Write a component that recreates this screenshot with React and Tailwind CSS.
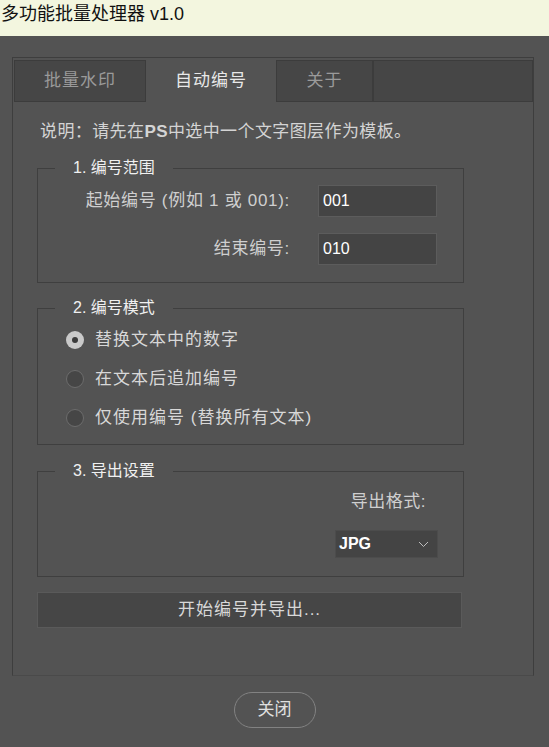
import React, { useState } from "react";

const TABS = [
  { id: "watermark", label: "批量水印", width: "w-[132px]" },
  { id: "number", label: "自动编号", width: "w-[130px]" },
  { id: "about", label: "关于", width: "w-[97px]" },
];

const MODES = ["替换文本中的数字", "在文本后追加编号", "仅使用编号 (替换所有文本)"];

const FONT = { fontFamily: '"Liberation Sans", "Noto Sans CJK SC", sans-serif' };

function Legend({ children }) {
  return (
    <legend className="ml-[17px] px-[18px] text-[16px] leading-[24px] text-[#f0f0f0]">
      {children}
    </legend>
  );
}

function Radio({ checked, label, onClick }) {
  return (
    <div className="flex h-[39px] items-center cursor-default" onClick={onClick}>
      {checked ? (
        <span className="ml-[28px] flex h-[18px] w-[18px] items-center justify-center rounded-full bg-[#c9c9c9]">
          <span className="h-[6px] w-[6px] rounded-full bg-[#3a3a3a]" />
        </span>
      ) : (
        <span className="ml-[28px] h-[18px] w-[18px] rounded-full border border-[#6c6c6c] bg-[#464646]" />
      )}
      <span className="ml-[11px] text-[17px] tracking-[1px] text-[#d8d8d8]">{label}</span>
    </div>
  );
}

export default function App() {
  const [tab, setTab] = useState("number");
  const [mode, setMode] = useState(0);
  const [start, setStart] = useState("001");
  const [end, setEnd] = useState("010");

  return (
    <div className="min-h-[747px] w-[549px] bg-[#535353]" style={FONT}>
      {/* title bar */}
      <div className="h-[36px] bg-[#f3f6df] pl-[1px] text-[18px] leading-[28px] text-[#111111]">
        多功能批量处理器 v1.0
      </div>

      {/* tab panel */}
      <div className="ml-[12px] mt-[21px] w-[522px] border border-[#3e3e3e] border-b-[#4a4a4a] pb-[47px]">
        <div className="flex h-[42px] mt-[2px] pl-[1px]">
          {TABS.map(t =>
            t.id === tab ? (
              <div
                key={t.id}
                className={`${t.width} flex items-center justify-center text-[17px] tracking-[1px] text-[#e8e8e8]`}
              >
                {t.label}
              </div>
            ) : (
              <div
                key={t.id}
                onClick={() => setTab(t.id)}
                className={`${t.width} flex items-center justify-center border border-[#3c3c3c] bg-[#464646] text-[17px] tracking-[1px] text-[#9a9a9a]`}
              >
                {t.label}
              </div>
            )
          )}
          <div className="flex-1 border border-[#3c3c3c] bg-[#464646]" />
        </div>

        <div className="mt-[18px] pl-[27px] text-[17px] leading-[24px] tracking-[0.4px] text-[#d4d4d4]">
          说明：请先在<b className="font-bold">PS</b>中选中一个文字图层作为模板。
        </div>

        {/* 1. range */}
        <fieldset className="ml-[24px] mt-[12px] w-[427px] border border-[#3f3f3f] pb-[17px] pt-[5px]">
          <Legend>1. 编号范围</Legend>
          <div className="flex items-center">
            <label className="w-[252px] text-right text-[17px] tracking-[0.7px] text-[#cfcfcf]">
              起始编号 (例如 1 或 001):
            </label>
            <input
              className="ml-[28px] h-[32px] w-[119px] border border-[#5c5c5c] bg-[#444444] px-[4px] text-[16px] text-white outline-none"
              value={start}
              onChange={e => setStart(e.target.value)}
            />
          </div>
          <div className="mt-[16px] flex items-center">
            <label className="w-[252px] text-right text-[17px] tracking-[0.7px] text-[#cfcfcf]">
              结束编号:
            </label>
            <input
              className="ml-[28px] h-[32px] w-[119px] border border-[#5c5c5c] bg-[#444444] px-[4px] text-[16px] text-white outline-none"
              value={end}
              onChange={e => setEnd(e.target.value)}
            />
          </div>
        </fieldset>

        {/* 2. mode */}
        <fieldset className="ml-[24px] mt-[13px] w-[427px] border border-[#3f3f3f] pb-[7px]">
          <Legend>2. 编号模式</Legend>
          {MODES.map((m, i) => (
            <Radio key={m} label={m} checked={mode === i} onClick={() => setMode(i)} />
          ))}
        </fieldset>

        {/* 3. export */}
        <fieldset className="ml-[24px] mt-[14px] w-[427px] border border-[#3f3f3f] pb-[18px]">
          <Legend>3. 导出设置</Legend>
          <div className="mt-[7px] flex flex-col items-end">
            <div className="mr-[37px] text-[17px] leading-[24px] tracking-[0.5px] text-[#cfcfcf]">导出格式:</div>
            <div className="mr-[25px] mt-[16px] flex h-[28px] w-[103px] items-center justify-between border border-[#4c4c4c] bg-[#444444] pl-[3px] pr-[8px]">
              <span className="text-[16px] font-semibold text-white">JPG</span>
              <svg width="11" height="7" viewBox="0 0 11 7" fill="none">
                <path d="M1 1l4.5 4.5L10 1" stroke="#bdbdbd" strokeWidth="1" />
              </svg>
            </div>
          </div>
        </fieldset>

        <button className="ml-[24px] mt-[15px] flex h-[36px] w-[425px] items-center justify-center border border-[#5a5a5a] bg-[#464646] text-[17px] tracking-[1px] text-[#d8d8d8]">
          开始编号并导出...
        </button>
      </div>

      <div className="flex justify-center pt-[16px]">
        <button className="h-[36px] w-[82px] rounded-full border border-[#828282] text-[17px] text-[#e0e0e0]">
          关闭
        </button>
      </div>
    </div>
  );
}
